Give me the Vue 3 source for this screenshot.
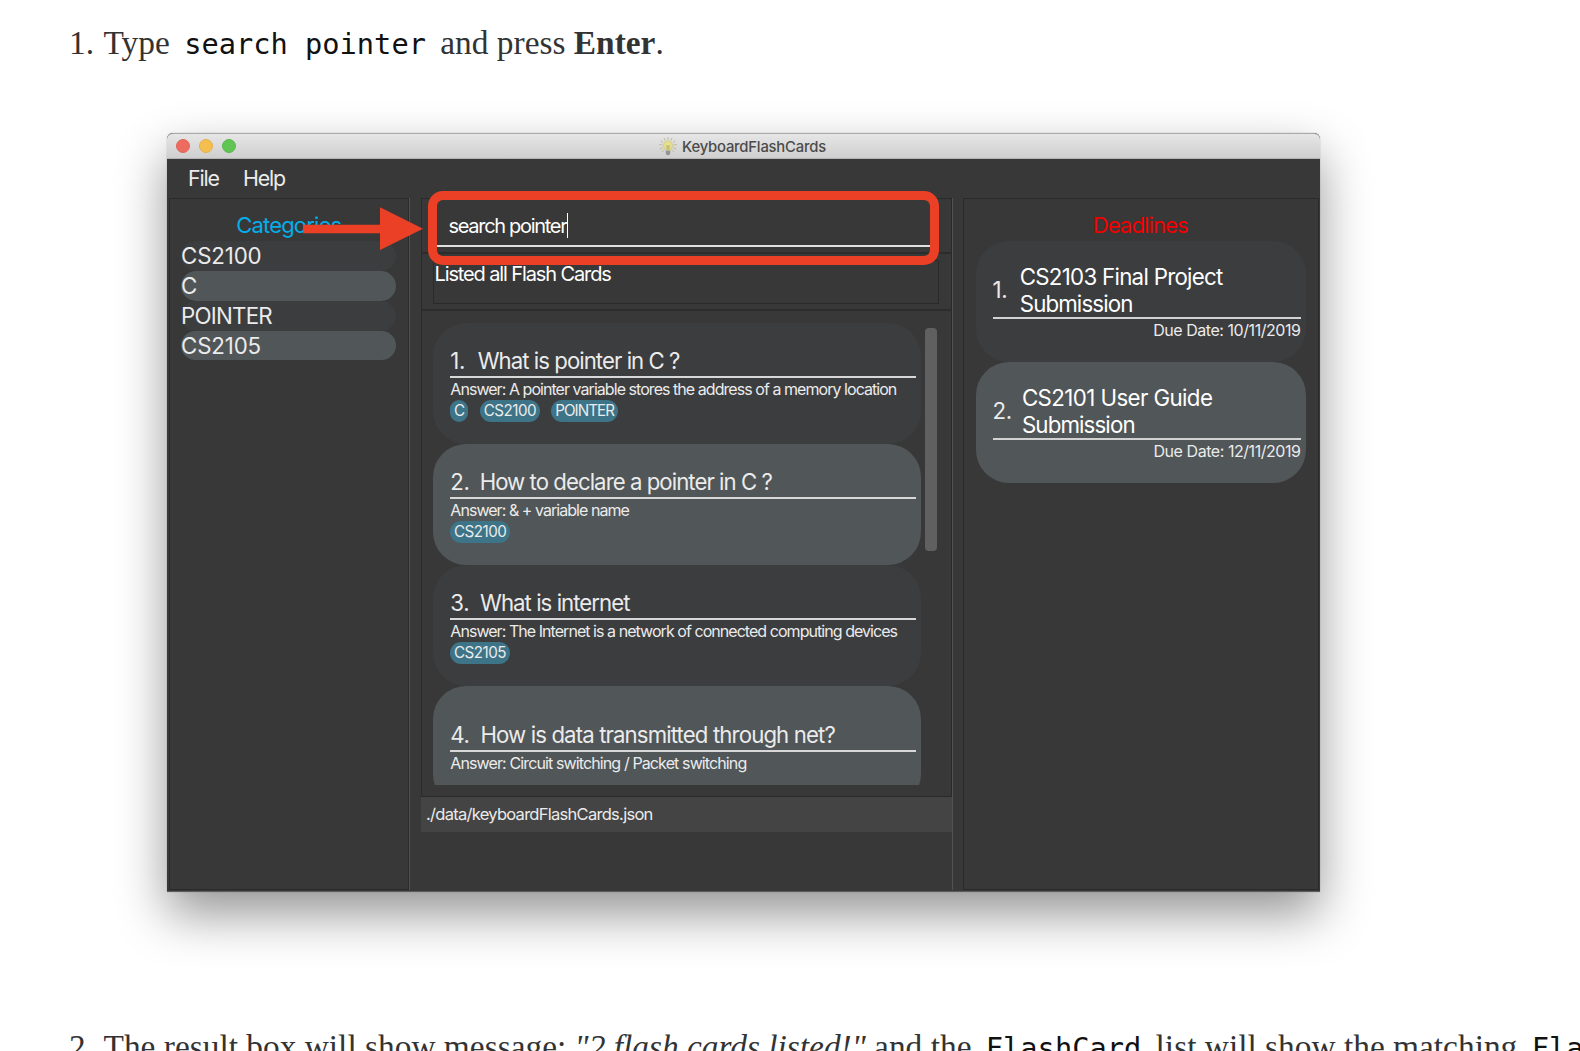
<script setup>
const categories = ['CS2100', 'C', 'POINTER', 'CS2105']

const cards = [
  { q: 'What is pointer in C ?', a: 'A pointer variable stores the address of a memory location', tags: ['C', 'CS2100', 'POINTER'] },
  { q: 'How to declare a pointer in C ?', a: '& + variable name', tags: ['CS2100'] },
  { q: 'What is internet', a: 'The Internet is a network of connected computing devices', tags: ['CS2105'] },
  { q: 'How is data transmitted through net?', a: 'Circuit switching / Packet switching', tags: [], tall: true },
]

const deadlines = [
  { title: ['CS2103 Final Project', 'Submission'], due: '10/11/2019' },
  { title: ['CS2101 User Guide', 'Submission'], due: '12/11/2019' },
]
</script>

<template>
  <div class="page">
    <p class="step first"><span class="num">1.</span>Type <code>search pointer</code> and press <b>Enter</b>.</p>

    <div class="window">
      <header class="titlebar">
        <div class="lights"><i class="close"></i><i class="min"></i><i class="max"></i></div>
        <div class="title">
          <svg class="bulb" width="18" height="19" viewBox="0 0 18 19">
            <g stroke="#b9b68c" stroke-width=".9" stroke-linecap="round">
              <path d="M9 .5v2M5.200 1.300l.8 1.900M12.800 1.300l-.8 1.900M2 3.800l1.700 1.400M16 3.800l-1.700 1.400M.6 7.600l2.300.3M17.400 7.600l-2.300.3M1.200 11.800l2.100-1M16.800 11.800l-2.100-1M3.200 14.600l1.500-1.600M14.800 14.600L13.300 13" />
            </g>
            <path d="M9 3.900a4.500 4.500 0 0 0-4.500 4.500c0 2.300 1.600 3.100 2.100 5.200h4.800c.5-2.100 2.100-2.900 2.100-5.200A4.500 4.500 0 0 0 9 3.900z" fill="#e6df8d" stroke="#c3bd7f" stroke-width=".6" />
            <path d="M7.300 8.400l1 1.300.7-1 .7 1 1-1.300M8.100 9.700v3.500M9.900 9.700v3.500" fill="none" stroke="#a09a62" stroke-width=".7" />
            <path d="M6.800 13.800h4.400v2.700q0 1.700-2.200 1.700t-2.200-1.700z" fill="#949494" />
          </svg>
          <span>KeyboardFlashCards</span>
        </div>
      </header>

      <nav class="menu"><span class="m-file">File</span><span>Help</span></nav>

      <div class="body">
        <section class="pane categories">
          <h2>Categories</h2>
          <ul>
            <li v-for="c in categories" :key="c">{{ c }}</li>
          </ul>
          <svg class="arrow" width="120" height="44" viewBox="0 0 120 44">
            <path d="M0 17.700h77V.3l43 21.400-43 21.400V26.200H0z" fill="#eb4026" />
          </svg>
        </section>

        <div class="divider"></div>

        <section class="middle">
          <div class="search">
            <div class="field"><span>search pointer</span><i class="caret"></i></div>
            <div class="highlight"></div>
          </div>
          <div class="result"><div class="message">Listed all Flash Cards</div></div>
          <div class="list">
            <div class="cards">
              <article v-for="(c, i) in cards" :key="i" class="card" :class="{ tall: c.tall }">
                <h3><span class="idx">{{ i + 1 }}.</span><span>{{ c.q }}</span></h3>
                <p>Answer: {{ c.a }}</p>
                <div class="tags"><span v-for="t in c.tags" :key="t">{{ t }}</span></div>
              </article>
            </div>
            <div class="thumb"></div>
          </div>
          <footer class="status">./data/keyboardFlashCards.json</footer>
        </section>

        <div class="divider right"></div>

        <section class="pane deadlines">
          <h2>Deadlines</h2>
          <article v-for="(d, i) in deadlines" :key="i" class="due-card">
            <div class="due-head">
              <span class="due-idx">{{ i + 1 }}.</span>
              <div class="due-title"><div v-for="l in d.title" :key="l">{{ l }}</div></div>
            </div>
            <p>Due Date: {{ d.due }}</p>
          </article>
        </section>
      </div>
    </div>

    <p class="step second"><span class="num">2.</span>The result box will show message: <em>"2 flash cards listed!"</em> and the <code>FlashCard</code> list will show the matching <code>FlashCard</code></p>
  </div>
</template>

<style>
body {
  background: #fff;
  overflow: hidden;
}
</style>

<style scoped>
.page {
  height: 1051px;
  overflow: hidden;
  box-sizing: border-box;
  padding-left: 69px;
}
h2, h3, p, ul {
  margin: 0;
  padding: 0;
  font-weight: 400;
  list-style: none;
}
.step {
  font: 33.4px/40px "Liberation Serif", serif;
  color: #333;
  white-space: nowrap;
}
.first { padding-top: 23px; height: 110px; }
.second { margin-top: 135px; }
.num { display: inline-block; width: 34.5px; }
code {
  font: 28.7px/30px "DejaVu Sans Mono", monospace;
  color: #111;
  padding: 0 6px;
}
.window {
  position: relative;
  margin-left: 98px;
  width: 1153px;
  height: 759px;
  box-sizing: border-box;
  display: flex;
  flex-direction: column;
  background: #383838;
  border-bottom: 1px solid #5c5c5c;
  border-radius: 6px 6px 0 0;
  box-shadow: 0 22px 50px rgba(0, 0, 0, .42), 0 0 1px rgba(0, 0, 0, .5);
  font-family: Inter, sans-serif;
  color: #ebebeb;
  white-space: nowrap;
}
.titlebar {
  position: relative;
  height: 26px;
  box-sizing: border-box;
  border-top: 1px solid #aaa;
  border-bottom: 1px solid #b4b4b4;
  border-radius: 6px 6px 0 0;
  background: linear-gradient(#e6e6e6, #cfcfcf);
  display: flex;
  align-items: center;
  justify-content: center;
}
.lights { position: absolute; left: 9.4px; top: 5px; display: flex; gap: 9px; }
.lights i { width: 14px; height: 14px; border-radius: 50%; box-sizing: border-box; }
.close { background: #ed6b5f; border: 1px solid #e0655a; }
.min { background: #f5bf4f; border: 1px solid #e4b04a; }
.max { background: #61c554; border: 1px solid #5ab94d; }
.title {
  display: flex;
  align-items: center;
  gap: 5px;
  font-size: 14.8px;
  font-weight: 500;
  letter-spacing: -.19px;
  color: #4a4a4a;
  padding: 1px 2px 0 0;
}
.menu {
  height: 39px;
  box-sizing: border-box;
  padding: 0 0 2px 21px;
  display: flex;
  align-items: center;
  font-size: 21.4px;
  letter-spacing: -1.15px;
}
.m-file { width: 55px; }
.body { flex: 1; display: flex; padding-left: 2px; min-height: 0; }
.pane { border: 1px solid #2a2a2a; box-sizing: border-box; height: 692px; position: relative; }
.pane h2 {
  text-align: center;
  font-size: 22px;
  line-height: 30px;
  padding: 11px 1.5px .6px 0;
  letter-spacing: -.85px;
}
.categories { width: 240px; padding: 0 12px 0 11px; }
.categories h2 { color: #05aee8; padding: 11px 0 .9px .5px; }
.categories li {
  height: 29.9px;
  line-height: 29.9px;
  border-radius: 15px;
  font-size: 22.3px;
  letter-spacing: -.15px;
}
.categories li:nth-child(3) { letter-spacing: -.75px; }
li:nth-child(odd), .card:nth-child(odd), .due-card:nth-of-type(odd) { background: #3c3d3f; }
li:nth-child(even), .card:nth-child(even), .due-card:nth-of-type(even) { background: #515658; }
.arrow { position: absolute; left: 133px; top: 7.5px; z-index: 2; }
.divider { border-left: 1px solid #525252; box-sizing: border-box; width: 12px; height: 692px; }
.divider.right { width: 11px; }
.middle { width: 531px; display: flex; flex-direction: column; }
.search {
  position: relative;
  height: 55.5px;
  box-sizing: border-box;
  border: 1px solid #2a2a2a;
  border-bottom: 2px solid #2c2c2c;
  padding: 7px 12px 0 11px;
}
.field {
  height: 41px;
  box-sizing: border-box;
  border-bottom: 2px solid #e0e0e0;
  display: flex;
  align-items: center;
  padding-left: 15.5px;
  font-size: 20px;
  letter-spacing: -1.3px;
  color: #fff;
}
.caret { width: 1px; height: 25px; margin-left: 1px; background: #fff; }
.highlight {
  position: absolute;
  left: 6px;
  top: -8px;
  width: 510.5px;
  height: 74px;
  box-sizing: border-box;
  border: 9px solid #eb4026;
  border-radius: 15px;
  z-index: 2;
}
.result {
  height: 57.5px;
  box-sizing: border-box;
  border: 1px solid #2a2a2a;
  border-top: 0;
  border-bottom: 2px solid #2c2c2c;
  padding: 6px 12px 0 11px;
}
.message {
  height: 44px;
  box-sizing: border-box;
  border: 1px solid #2a2a2a;
  padding-left: .5px;
  font-size: 20px;
  line-height: 27.5px;
  letter-spacing: -1.12px;
  color: #fff;
}
.list {
  height: 486px;
  box-sizing: border-box;
  border: 1px solid #2a2a2a;
  border-top: 0;
  padding: 12.4px 0 0 11px;
  display: flex;
}
.cards { width: 488.3px; height: 461.2px; overflow: hidden; }
.card {
  height: 121px;
  box-sizing: border-box;
  border-radius: 33px;
  padding: 25px 5.5px 0 17.3px;
}
.card.tall { padding-top: 36px; }
.card h3 {
  height: 30px;
  box-sizing: border-box;
  border-bottom: 2px solid #d8d8d8;
  display: flex;
  font-size: 22.2px;
  line-height: 26px;
  letter-spacing: -.95px;
}
.card.tall h3 { letter-spacing: -.87px; }
.idx { margin-right: 10.7px; letter-spacing: -.3px; }
.card:first-child .idx { margin-right: 12.5px; }
.card:nth-child(2) .idx { margin-right: 10px; }
.card p { font-size: 16px; line-height: 23px; letter-spacing: -.95px; height: 22px; }
.card.tall p { letter-spacing: -.88px; }
.tags { display: flex; gap: 11.7px; }
.tags span {
  height: 22px;
  line-height: 22px;
  border-radius: 11px;
  padding: 0 3.7px;
  background: #3e7488;
  font-size: 15.2px;
  letter-spacing: -.5px;
}
.tags span:nth-child(3) { letter-spacing: -.95px; }
.thumb { width: 12px; height: 223px; margin: 4.7px 0 0 3.5px; border-radius: 4px; background: #606060; }
.status {
  height: 34.5px;
  line-height: 34.5px;
  background: #444;
  padding-left: 5px;
  font-size: 16.5px;
  letter-spacing: -.72px;
}
.deadlines { width: 356px; padding: 0 12px; }
.deadlines h2 { color: #f20000; }
.due-card {
  height: 121px;
  box-sizing: border-box;
  border-radius: 33px;
  padding: 23px 5.5px 0 16.5px;
}
.due-head {
  display: flex;
  align-items: center;
  height: 55.5px;
  box-sizing: border-box;
  border-bottom: 2px solid #d2d2d2;
  font-size: 22.3px;
  line-height: 27px;
}
.due-idx { letter-spacing: -.3px; margin: 0 10px 1.5px 0; }
.due-card:nth-of-type(1) .due-idx { margin-right: 12.3px; }
.due-title { color: #fff; letter-spacing: -.72px; }
.due-title div:last-child { letter-spacing: -.88px; }
.due-card:nth-of-type(2) .due-title div:first-child { letter-spacing: -.6px; }
.due-card p { text-align: right; font-size: 16px; line-height: 23px; letter-spacing: -.45px; }
</style>
